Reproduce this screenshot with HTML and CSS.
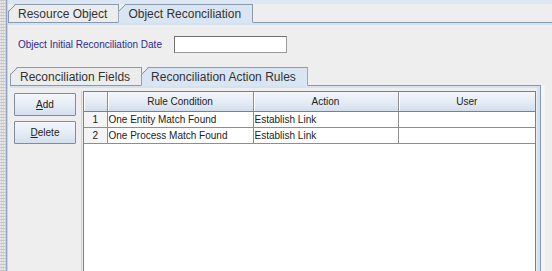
FILE: index.html
```html
<!DOCTYPE html>
<html>
<head>
<meta charset="utf-8">
<link rel="stylesheet" href="styles.css">
</head>
<body>
<div class="window">
  <div class="gutter"></div>
  <div class="edge"></div>
  <div class="main">
    <div class="topstrip"></div>
    <div class="tabs tabs-top">
      <div class="tab">Resource Object</div>
      <div class="tab selected">Object Reconciliation</div>
    </div>
    <div class="band"></div>
    <div class="tabbody">
      <div class="daterow">
        <span class="datelabel">Object Initial Reconciliation Date</span>
        <div class="input"></div>
      </div>
      <div class="tabs tabs-inner">
        <div class="tab">Reconciliation Fields</div>
        <div class="tab selected">Reconciliation Action Rules</div>
      </div>
      <div class="panel">
        <div class="btncol">
          <button class="btn"><u>A</u>dd</button>
          <button class="btn"><u>D</u>elete</button>
        </div>
        <div class="grid">
          <table class="rules">
            <colgroup>
              <col class="c-num"><col class="c-rule"><col class="c-action"><col class="c-user">
            </colgroup>
            <thead>
              <tr><th></th><th>Rule Condition</th><th>Action</th><th>User</th></tr>
            </thead>
            <tbody>
              <tr><td class="num">1</td><td>One Entity Match Found</td><td>Establish Link</td><td></td></tr>
              <tr><td class="num">2</td><td>One Process Match Found</td><td>Establish Link</td><td></td></tr>
            </tbody>
          </table>
        </div>
      </div>
    </div>
  </div>
</div>
</body>
</html>
```
FILE: styles.css
```css
* { box-sizing: border-box; }
html, body { margin: 0; padding: 0; }
body {
  width: 552px;
  height: 271px;
  overflow: hidden;
  background: #eeeeee;
  font-family: "Liberation Sans", Arial, sans-serif;
  color: #333333;
}
.window {
  display: flex;
  width: 552px;
  height: 271px;
}
.gutter {
  width: 6px;
  flex: none;
  background:
    repeating-linear-gradient(0deg, #c6c6c6 0 1px, transparent 1px 3px),
    repeating-linear-gradient(90deg, #e9e9e9 0 1px, #d6d6d6 1px 2px);
}
.edge {
  width: 2px;
  flex: none;
  background: linear-gradient(90deg, #8ea5c6 0 1px, #c3d3e8 1px 2px);
}
.main {
  width: 544px;
  flex: none;
  display: flex;
  flex-direction: column;
}
.topstrip {
  height: 4px;
  flex: none;
  background: #dde7f4;
}
.tabs {
  display: flex;
  align-items: flex-end;
  flex: none;
}
.tabs-top {
  height: 19px;
  border-bottom: 1px solid #8799ae;
}
.tab {
  height: 19px;
  margin-bottom: -1px;
  padding: 0 11px 0 9px;
  border: 1px solid #8a9bae;
  background-color: #ececec;
  background-image:
    linear-gradient(to bottom right, transparent calc(50% - 0.8px), #8a9bae 50%, transparent calc(50% + 0.8px));
  background-repeat: no-repeat;
  background-size: 8px 8px;
  background-origin: border-box;
  background-position: 0 0;
  clip-path: polygon(0 100%, 0 7px, 7px 0, 100% 0, 100% 100%);
  font-size: 12px;
  line-height: 18px;
  color: #333;
  white-space: nowrap;
  border-bottom: 1px solid #8799ae;
}
.tab + .tab { margin-left: -1px; }
.tab.selected {
  background-color: #d9e5f3;
  border-bottom-color: #d9e5f3;
  position: relative;
  z-index: 1;
}
.band {
  height: 2px;
  flex: none;
  background: #d5e1ef;
}
.tabbody {
  flex: 1;
  display: flex;
  flex-direction: column;
  align-items: flex-start;
  min-height: 0;
}
.daterow {
  display: flex;
  align-items: center;
  height: 17px;
  margin-top: 11px;
  padding-left: 10px;
}
.datelabel {
  font-size: 10px;
  color: #2b2b8e;
  width: 156px;
}
.input {
  width: 113px;
  height: 17px;
  background: #fff;
  border: 1px solid #9a9a9a;
  border-top-color: #6f6f6f;
  border-left-color: #6f6f6f;
}
.tabs-inner {
  width: 531px;
  margin-top: 14px;
  margin-left: 2px;
  height: 19px;
  border-bottom: 1px solid #8799ae;
}
.panel {
  width: 531px;
  flex: 1;
  display: flex;
  margin-left: 2px;
  padding: 5px 4px 0 4px;
  border-right: 1px solid #8799ae;
  box-shadow: inset -3px 0 0 #d5e1ef, inset 0 2px 0 #d5e1ef, 4px 0 0 #f5f5f5;
  min-height: 0;
}
.btncol {
  width: 68px;
  flex: none;
  display: flex;
  flex-direction: column;
  gap: 5px;
  padding-top: 2px;
  border-right: 1px solid #d2d2d2;
  margin-right: 1px;
}
.btn {
  width: 62px;
  height: 23px;
  padding: 0;
  margin: 0;
  border: 1px solid #7d8ea2;
  border-radius: 1px;
  background: linear-gradient(to bottom, #f4f7fb 0%, #e6edf6 50%, #d3dfee 100%);
  font-family: "Liberation Sans", Arial, sans-serif;
  font-size: 10px;
  color: #222;
}
.btn u { text-decoration-thickness: 1px; }
.grid {
  flex: 1;
  background: #fff;
  border: 1px solid #7f7f7f;
  border-bottom: none;
  min-width: 0;
}
.rules {
  width: 100%;
  border-collapse: collapse;
  table-layout: fixed;
  font-size: 10px;
  color: #222;
}
.c-num { width: 23px; }
.c-rule { width: 146px; }
.c-action { width: 145px; }
.rules th {
  height: 19px;
  font-weight: normal;
  text-align: center;
  background: linear-gradient(to bottom, #f3f6fa 0%, #e4ebf4 55%, #d3deec 100%);
  border-right: 1px solid #8e8e8e;
  border-bottom: 1px solid #808080;
  box-shadow: inset 1px 0 0 #ffffff;
  padding: 0;
}
.rules th:last-child { border-right: none; }
.rules td {
  height: 16px;
  padding: 0 0 0 1px;
  border-right: 1px solid #8e8e8e;
  border-bottom: 1px solid #8e8e8e;
  white-space: nowrap;
  overflow: hidden;
}
.rules td:last-child { border-right: none; }
.rules td.num {
  text-align: center;
  padding: 0;
  background: #f4f4f4;
}
```
